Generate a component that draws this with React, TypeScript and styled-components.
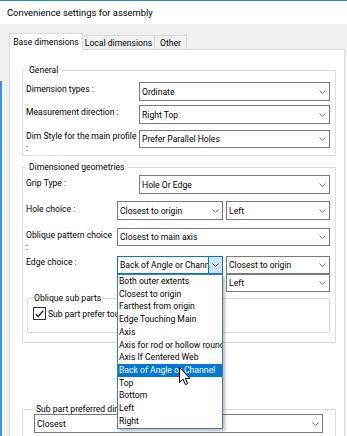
import React from 'react';
import styled, { createGlobalStyle } from 'styled-components';

const GlobalStyle = createGlobalStyle`
  html, body {
    margin: 0;
    padding: 0;
  }
  body {
    background: #f0f0f0;
    font-family: Roboto, "Noto Sans", sans-serif;
    font-size: 8.6px;
    color: #000;
  }
`;

const Window = styled.div`
  position: relative;
  width: 347px;
  height: 436px;
  overflow: hidden;
  box-sizing: border-box;
  border-top: 1px solid #2b88d8;
  background: linear-gradient(#3d93dc, #3d93dc) no-repeat 0 80px / 2px calc(100% - 80px), #f0f0f0;
  display: flex;
  flex-direction: column;
`;

const TitleBar = styled.div`
  flex: 0 0 23px;
  display: flex;
  align-items: center;
  padding-left: 7px;
  background: #fff;
  font-size: 9.4px;
`;

const Body = styled.div`
  flex: 1;
  display: flex;
  flex-direction: column;
  padding: 9px 2px 0 9px;
`;

const TabStrip = styled.div`
  display: flex;
  align-items: flex-end;
  height: 16px;
`;

const Tab = styled.div<{ $active?: boolean; $w: number }>`
  position: relative;
  z-index: ${({ $active }) => ($active ? 1 : 0)};
  box-sizing: border-box;
  width: ${({ $w }) => $w}px;
  height: ${({ $active }) => ($active ? 17 : 14)}px;
  margin-bottom: ${({ $active }) => ($active ? -1 : 0)}px;
  margin-left: ${({ $active }) => ($active ? 0 : -1)}px;
  display: flex;
  align-items: center;
  justify-content: center;
  white-space: nowrap;
  border: 1px solid #d9d9d9;
  border-bottom: none;
  background: ${({ $active }) => ($active ? '#fff' : '#f0f0f0')};
`;

const Panel = styled.div`
  flex: 1;
  display: flex;
  flex-direction: column;
  background: #fff;
  border: 1px solid #d9d9d9;
  padding: 14px 8px 0 12px;
`;

const Group = styled.fieldset<{ $pad: string; $mt?: number; $ml?: number }>`
  margin: ${({ $mt }) => $mt ?? 0}px 0 0 ${({ $ml }) => $ml ?? 0}px;
  min-width: 0;
  border: 1px solid #dcdcdc;
  padding: ${({ $pad }) => $pad};
`;

const Legend = styled.legend<{ $px?: number }>`
  padding: 0 ${({ $px }) => $px ?? 3}px;
  line-height: 13px;
  height: 13px;
  white-space: nowrap;
`;

const Row = styled.div<{ $mt?: number }>`
  display: flex;
  align-items: flex-start;
  margin-top: ${({ $mt }) => $mt ?? 0}px;
`;

const Label = styled.div<{ $w: number; $pt?: number }>`
  flex: 0 0 ${({ $w }) => $w}px;
  padding-top: ${({ $pt }) => $pt ?? 1}px;
  line-height: 12px;
  white-space: nowrap;
`;

const Controls = styled.div`
  flex: 1;
  display: flex;
  align-items: flex-start;
  gap: 3px;
  min-width: 0;
`;

const Stack = styled.div`
  flex: 1;
  display: flex;
  flex-direction: column;
`;

const ComboWrap = styled.div<{ $w?: number }>`
  position: relative;
  flex: ${({ $w }) => ($w ? `0 0 ${$w}px` : '1')};
  min-width: 0;
`;

const ComboBox = styled.div<{ $h?: number; $open?: boolean }>`
  box-sizing: border-box;
  height: ${({ $h }) => $h ?? 19}px;
  display: flex;
  align-items: center;
  background: #fff;
  border: 1px solid ${({ $open }) => ($open ? '#0078d7' : '#7a7a7a')};
  padding-left: 2px;
`;

const ComboText = styled.span`
  flex: 1;
  overflow: hidden;
  white-space: nowrap;
`;

const Arrow = styled.div`
  flex: 0 0 auto;
  display: flex;
  align-items: center;
  padding: 0 3px 0 4px;
`;

const DropButton = styled.div`
  flex: 0 0 13px;
  align-self: stretch;
  display: flex;
  align-items: center;
  justify-content: center;
  background: #cce4f7;
  border-left: 1px solid #0078d7;
`;

const DropList = styled.div`
  position: absolute;
  z-index: 5;
  top: 100%;
  left: 0;
  width: 106px;
  box-sizing: border-box;
  background: #fff;
  border: 1px solid #3c7fb1;
  box-shadow: 2px 2px 3px rgba(0, 0, 0, 0.28);
`;

const DropItem = styled.div<{ $selected?: boolean }>`
  height: 12.73px;
  line-height: 12.73px;
  padding-left: 1px;
  white-space: nowrap;
  overflow: hidden;
  background: ${({ $selected }) => ($selected ? '#0078d7' : 'transparent')};
  color: ${({ $selected }) => ($selected ? '#fff' : '#000')};
`;

const CheckRow = styled.div`
  display: flex;
  align-items: center;
  gap: 2px;
  height: 13px;
  white-space: nowrap;
`;

const CheckBox = styled.div`
  flex: 0 0 13px;
  height: 13px;
  box-sizing: border-box;
  border: 1px solid #333;
  background: #fff;
  display: flex;
  align-items: center;
  justify-content: center;
`;

const BottomCombo = styled.div`
  margin-top: -2px;
`;

const Cursor = styled.svg`
  position: absolute;
  left: 179px;
  top: 366px;
  z-index: 10;
`;

const Chevron = ({ color = '#7a7a7a' }: { color?: string }) => (
  <svg width="7" height="4" viewBox="0 0 7 4">
    <path d="M0.5 0.5 L3.5 3.5 L6.5 0.5" fill="none" stroke={color} strokeWidth="1" />
  </svg>
);

type ComboProps = {
  value: string;
  h?: number;
};

const Combo = ({ value, h }: ComboProps) => (
  <ComboBox $h={h}>
    <ComboText>{value}</ComboText>
    <Arrow>
      <Chevron />
    </Arrow>
  </ComboBox>
);

const edgeItems = [
  'Both outer extents',
  'Closest to origin',
  'Farthest from origin',
  'Edge Touching Main',
  'Axis',
  'Axis for rod or hollow round',
  'Axis If Centered Web',
  'Back of Angle or Channel',
  'Top',
  'Bottom',
  'Left',
  'Right',
];

export default function App() {
  return (
    <>
      <GlobalStyle />
      <Window>
        <TitleBar>Convenience settings for assembly</TitleBar>
        <Body>
          <TabStrip>
            <Tab $active $w={74}>Base dimensions</Tab>
            <Tab $w={73}>Local dimensions</Tab>
            <Tab $w={33}>Other</Tab>
          </TabStrip>
          <Panel>
            <Group $pad="5px 5px 1px 3px">
              <Legend>General</Legend>
              <Row>
                <Label $w={113}>Dimension types :</Label>
                <Controls>
                  <ComboWrap>
                    <Combo value="Ordinate" />
                  </ComboWrap>
                </Controls>
              </Row>
              <Row $mt={4}>
                <Label $w={113}>Measurement direction :</Label>
                <Controls>
                  <ComboWrap>
                    <Combo value="Right Top" />
                  </ComboWrap>
                </Controls>
              </Row>
              <Row $mt={6}>
                <Label $w={113} $pt={0}>
                  Dim Style for the main profile
                  <br />:
                </Label>
                <Controls>
                  <ComboWrap>
                    <Combo value="Prefer Parallel Holes" h={18} />
                  </ComboWrap>
                </Controls>
              </Row>
            </Group>

            <Group $pad="1px 5px 9px 3px" $mt={5}>
              <Legend>Dimensioned geometries</Legend>
              <Row>
                <Label $w={113} $pt={2}>Grip Type :</Label>
                <Controls>
                  <ComboWrap>
                    <Combo value="Hole Or Edge" />
                  </ComboWrap>
                </Controls>
              </Row>
              <Row $mt={7}>
                <Label $w={91} $pt={2}>Hole choice :</Label>
                <Controls>
                  <ComboWrap $w={106}>
                    <Combo value="Closest to origin" />
                  </ComboWrap>
                  <ComboWrap>
                    <Combo value="Left" />
                  </ComboWrap>
                </Controls>
              </Row>
              <Row $mt={8}>
                <Label $w={91} $pt={1}>
                  Oblique pattern choice
                  <br />:
                </Label>
                <Controls>
                  <ComboWrap>
                    <Combo value="Closest to main axis" h={18} />
                  </ComboWrap>
                </Controls>
              </Row>
              <Row $mt={3}>
                <Label $w={91} $pt={0}>Edge choice :</Label>
                <Controls>
                  <ComboWrap $w={106}>
                    <ComboBox $h={18} $open>
                      <ComboText>Back of Angle or Channel</ComboText>
                      <DropButton>
                        <Chevron color="#333" />
                      </DropButton>
                    </ComboBox>
                    <DropList>
                      {edgeItems.map((item) => (
                        <DropItem key={item} $selected={item === 'Back of Angle or Channel'}>
                          {item}
                        </DropItem>
                      ))}
                    </DropList>
                  </ComboWrap>
                  <Stack>
                    <Combo value="Closest to origin" h={18} />
                    <Combo value="Left" h={18} />
                  </Stack>
                </Controls>
              </Row>
              <Group $pad="2px 5px 12px 5px" $ml={1}>
                <Legend $px={1}>Oblique sub parts</Legend>
                <CheckRow>
                  <CheckBox>
                    <svg width="9" height="8" viewBox="0 0 9 8">
                      <path d="M0.8 4 L3.2 6.5 L8.2 0.8" fill="none" stroke="#222" strokeWidth="1.3" />
                    </svg>
                  </CheckBox>
                  Sub part prefer touching
                </CheckRow>
              </Group>
            </Group>

            <Group $pad="0 12px 6px 11px" $mt={60}>
              <Legend $px={2}>Sub part preferred dimension</Legend>
              <BottomCombo>
                <Combo value="Closest" />
              </BottomCombo>
            </Group>
          </Panel>
        </Body>
        <Cursor width="12" height="19" viewBox="0 0 12 19">
          <path
            d="M0.5 0.5 L0.5 15.5 L4 12.2 L6.4 17.6 L8.6 16.6 L6.3 11.3 L10.9 11.3 Z"
            fill="#fff"
            stroke="#000"
            strokeWidth="1"
            strokeLinejoin="round"
          />
        </Cursor>
      </Window>
    </>
  );
}
